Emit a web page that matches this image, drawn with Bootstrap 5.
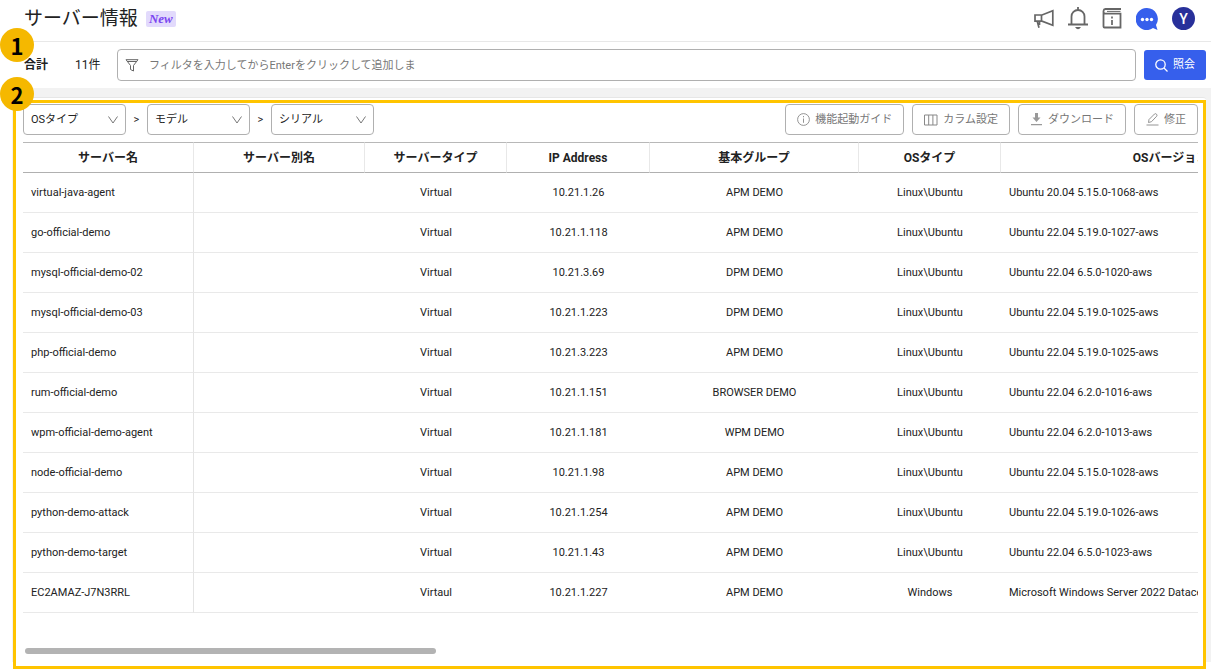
<!DOCTYPE html>
<html lang="ja">
<head>
<meta charset="utf-8">
<meta name="viewport" content="width=device-width, initial-scale=1">
<title>サーバー情報</title>
<link rel="stylesheet" href="https://cdn.jsdelivr.net/npm/bootstrap@5.3.0/dist/css/bootstrap.min.css">
<style>
  body { font-family: Roboto, "Noto Sans CJK JP", sans-serif; font-size: 11px; line-height: 16px; color: #222; background: #fff; }
  .shell { min-height: 100vh; padding-left: 12px; padding-bottom: 7px; }
  .topbar { height: 42px; border-bottom: 1px solid #e8e8e8; padding: 0 16px 4px 12px; }
  .page-title { font-size: 19px; line-height: 28px; font-weight: 400; }
  .new-tag { font: italic bold 13px/16px "Liberation Serif", serif; color: #7a45f0; background: #e2dafc; width: 30px; border-radius: 2px; }
  .top-icons { gap: 14px; }
  .icon-btn { border: 0; background: none; padding: 0; line-height: 0; color: #666; }
  .avatar { width: 23px; height: 23px; background: #28309a; color: #fff; font-size: 14px; font-weight: 500; }
  .filterbar { height: 46px; padding: 0 5px 0 12px; font-size: 12px; }
  .filterbar .total { width: 51px; }
  .filterbar .count { width: 42px; }
  .box { border: 1px solid #b0b0b0; border-radius: 4px; background: #fff; }
  .filterbox { height: 32px; padding: 0 7px; gap: 10px; margin-right: 8px; }
  .filterbox input { border: 0; outline: 0; padding: 1px 0 0; width: 275px; font-size: 11px; background: none; }
  .filterbox input::placeholder { color: #777; opacity: 1; }
  .search-btn { width: 62px; height: 30px; background: #365fec; color: #fff; border: 0; border-radius: 3px; font-size: 11px; gap: 5px; }
  .content { background: #f2f2f2; padding: 9px 5px 0 1px; }
  .panel { background: #fff; border-top: 1px solid #e6e6e6; border-radius: 3px 3px 0 0; padding: 6px 8px 8px 10px; }
  .highlight { inset: 2px 0 -7px 0; border: 3px solid #ffc400; pointer-events: none; }
  .step { left: 0; width: 34px; height: 34px; background: #f5b800; color: #000; font: bold 22px/34px "Noto Sans CJK JP", sans-serif; }
  .step-one { top: 28px; }
  .step-two { top: 77px; }
  .pick { width: 103px; height: 31px; padding: 1px 7px 0; font-size: 11px; color: #222; appearance: none;
    background: #fff url("data:image/svg+xml,%3Csvg xmlns='http://www.w3.org/2000/svg' width='10' height='8' fill='none' stroke='%23777'%3E%3Cpath d='M.5.5 5 7 9.500.5'/%3E%3C/svg%3E") no-repeat right 7px center; }
  .sep { width: 21px; text-align: center; }
  .tool { height: 31px; padding: 0 11px; color: #777; gap: 5px; }
  .grid-wrap { overflow: hidden; margin-top: 7px; }
  .grid { table-layout: fixed; width: 1318px; border-collapse: separate; border-spacing: 0; }
  .grid th { height: 31px; font-size: 12px; font-weight: 700; text-align: center; border-top: 1px solid #b8b8b8; border-bottom: 1px solid #b0b0b0; border-right: 1px solid #e8e8e8; padding: 0; }
  .grid td { height: 40px; text-align: center; border-bottom: 1px solid #e9e9e9; padding: 0 8px; white-space: nowrap; }
  .grid td:first-child { border-right: 1px solid #e4e4e4; }
  .grid td:first-child, .grid td:last-child { text-align: left; }
  .thumb { width: 35%; height: 6px; margin-left: 2px; background: #b3b3b3; border-radius: 3px; }
</style>
</head>
<body>
<div class="shell d-flex flex-column position-relative">
  <header class="topbar d-flex align-items-center">
    <h1 class="page-title mb-0">サーバー情報</h1>
    <span class="new-tag text-center ms-2">New</span>
    <nav class="top-icons d-flex align-items-center ms-auto" aria-label="メニュー">
      <button class="icon-btn" aria-label="お知らせ"><svg width="20" height="20" viewBox="0 0 20 20" fill="none" stroke="currentColor" stroke-width="1.7"><path d="M1 6h7l10.800-4.200v14.400L8 12.200H1zM7.500 6v6.200M3.300 12.500l1.700 6.200M5.500 12.500v3.500"/></svg></button>
      <button class="icon-btn" aria-label="通知"><svg width="20" height="23" viewBox="0 0 20 23" fill="none" stroke="currentColor" stroke-width="1.8"><path d="M0 17.500h20M3.500 17V9.500a6.500 6.500 0 0 1 13 0V17M10 0v3"/><path d="M7 20h6q-3 4.500-6 0z" fill="currentColor" stroke="none"/></svg></button>
      <button class="icon-btn" aria-label="情報"><svg width="20" height="21" viewBox="0 0 20 21" fill="none" stroke="currentColor" stroke-width="1.800"><path d="M19 1H3.500A2.200 2.200 0 0 0 1.500 3v15.500q0 1 1 1H18.500V5.700H3.500A2 2 0 0 1 1.500 3.500"/><path d="M5 3.400h13.500" stroke-width="1"/><path d="M10 8.500v2M10 12v5" stroke-width="1.700"/></svg></button>
      <button class="icon-btn" aria-label="チャット"><svg width="22" height="22" viewBox="0 0 22 22"><path d="M11 0a11 11 0 1 0 6 20l4.500 2-1.500-5A11 11 0 0 0 11 0z" fill="#365fec"/><g fill="#fff"><circle cx="6.500" cy="11.500" r="1.700"/><circle cx="11" cy="11.500" r="1.700"/><circle cx="15.500" cy="11.500" r="1.700"/></g></svg></button>
      <button class="icon-btn avatar rounded-circle d-flex align-items-center justify-content-center" aria-label="アカウント">Y</button>
    </nav>
  </header>

  <form class="filterbar d-flex align-items-center">
    <strong class="total">合計</strong>
    <span class="count">11件</span>
    <label class="filterbox box d-flex align-items-center flex-grow-1">
      <svg width="14" height="13" viewBox="0 0 14 13" fill="none" stroke="#666"><path d="M1 .7h12L8.500 6.500V12l-3-1.500v-4zM2 2.500h10"/></svg>
      <input type="text" aria-label="フィルタ" placeholder="フィルタを入力してからEnterをクリックして追加しま">
    </label>
    <button type="button" class="search-btn d-flex align-items-center justify-content-center">
      <svg width="13" height="13" viewBox="0 0 13 13" fill="none" stroke="#fff" stroke-width="1.300"><circle cx="5.500" cy="5.500" r="4.700"/><path d="M9 9l3.500 3.500"/></svg>照会
    </button>
  </form>

  <main class="content flex-grow-1 d-flex flex-column">
    <section class="panel flex-grow-1 position-relative d-flex flex-column">
      <div class="d-flex align-items-center">
        <select class="pick box" aria-label="OSタイプ"><option>OSタイプ</option></select>
        <span class="sep">&gt;</span>
        <select class="pick box" aria-label="モデル"><option>モデル</option></select>
        <span class="sep">&gt;</span>
        <select class="pick box" aria-label="シリアル"><option>シリアル</option></select>
        <div class="d-flex ms-auto gap-2">
          <button class="tool box d-flex align-items-center"><svg width="13" height="13" viewBox="0 0 13 13" fill="none" stroke="#888" stroke-width=".9"><circle cx="6.500" cy="6.500" r="5.900"/><path d="M6.500 5.500v4.300M6.500 3v1.300"/></svg>機能起動ガイド</button>
          <button class="tool box d-flex align-items-center"><svg width="14" height="12" viewBox="0 0 14 12" fill="none" stroke="#888"><path d="M.5 1h12.500v10H.5zM4.700 1v10M8.900 1v10"/></svg>カラム設定</button>
          <button class="tool box d-flex align-items-center"><svg width="13" height="13" viewBox="0 0 13 13" fill="#999"><path d="M5 0h3v4.500h2.500L6.500 9 2.500 4.500H5zM1 11h11v1.300H1z"/></svg>ダウンロード</button>
          <button class="tool box d-flex align-items-center"><svg width="13" height="13" viewBox="0 0 13 13" fill="none" stroke="#888" stroke-width=".9"><path d="M.5 12h12M2.500 9.500l.5-3L8.500 1q1-.8 2 .2t.2 2L5.500 8.700z"/></svg>修正</button>
        </div>
      </div>

      <div class="grid-wrap">
        <table class="grid">
          <colgroup><col style="width:171px"><col style="width:171px"><col style="width:142px"><col style="width:143px"><col style="width:209px"><col style="width:142px"><col style="width:340px"></colgroup>
          <thead><tr><th>サーバー名</th><th>サーバー別名</th><th>サーバータイプ</th><th>IP Address</th><th>基本グループ</th><th>OSタイプ</th><th>OSバージョン</th></tr></thead>
          <tbody>
            <tr><td>virtual-java-agent</td><td></td><td>Virtual</td><td>10.21.1.26</td><td>APM DEMO</td><td>Linux\Ubuntu</td><td>Ubuntu 20.04 5.15.0-1068-aws</td></tr>
            <tr><td>go-official-demo</td><td></td><td>Virtual</td><td>10.21.1.118</td><td>APM DEMO</td><td>Linux\Ubuntu</td><td>Ubuntu 22.04 5.19.0-1027-aws</td></tr>
            <tr><td>mysql-official-demo-02</td><td></td><td>Virtual</td><td>10.21.3.69</td><td>DPM DEMO</td><td>Linux\Ubuntu</td><td>Ubuntu 22.04 6.5.0-1020-aws</td></tr>
            <tr><td>mysql-official-demo-03</td><td></td><td>Virtual</td><td>10.21.1.223</td><td>DPM DEMO</td><td>Linux\Ubuntu</td><td>Ubuntu 22.04 5.19.0-1025-aws</td></tr>
            <tr><td>php-official-demo</td><td></td><td>Virtual</td><td>10.21.3.223</td><td>APM DEMO</td><td>Linux\Ubuntu</td><td>Ubuntu 22.04 5.19.0-1025-aws</td></tr>
            <tr><td>rum-official-demo</td><td></td><td>Virtual</td><td>10.21.1.151</td><td>BROWSER DEMO</td><td>Linux\Ubuntu</td><td>Ubuntu 22.04 6.2.0-1016-aws</td></tr>
            <tr><td>wpm-official-demo-agent</td><td></td><td>Virtual</td><td>10.21.1.181</td><td>WPM DEMO</td><td>Linux\Ubuntu</td><td>Ubuntu 22.04 6.2.0-1013-aws</td></tr>
            <tr><td>node-official-demo</td><td></td><td>Virtual</td><td>10.21.1.98</td><td>APM DEMO</td><td>Linux\Ubuntu</td><td>Ubuntu 22.04 5.15.0-1028-aws</td></tr>
            <tr><td>python-demo-attack</td><td></td><td>Virtual</td><td>10.21.1.254</td><td>APM DEMO</td><td>Linux\Ubuntu</td><td>Ubuntu 22.04 5.19.0-1026-aws</td></tr>
            <tr><td>python-demo-target</td><td></td><td>Virtual</td><td>10.21.1.43</td><td>APM DEMO</td><td>Linux\Ubuntu</td><td>Ubuntu 22.04 6.5.0-1023-aws</td></tr>
            <tr><td>EC2AMAZ-J7N3RRL</td><td></td><td>Virtaul</td><td>10.21.1.227</td><td>APM DEMO</td><td>Windows</td><td>Microsoft Windows Server 2022 Datacenter</td></tr>
          </tbody>
        </table>
      </div>
      <div class="thumb mt-auto"></div>
      <div class="highlight position-absolute"></div>
    </section>
  </main>
  <span class="step step-one position-absolute rounded-circle text-center">1</span>
  <span class="step step-two position-absolute rounded-circle text-center">2</span>
</div>
<script src="https://cdn.jsdelivr.net/npm/bootstrap@5.3.0/dist/js/bootstrap.bundle.min.js"></script>
</body>
</html>
